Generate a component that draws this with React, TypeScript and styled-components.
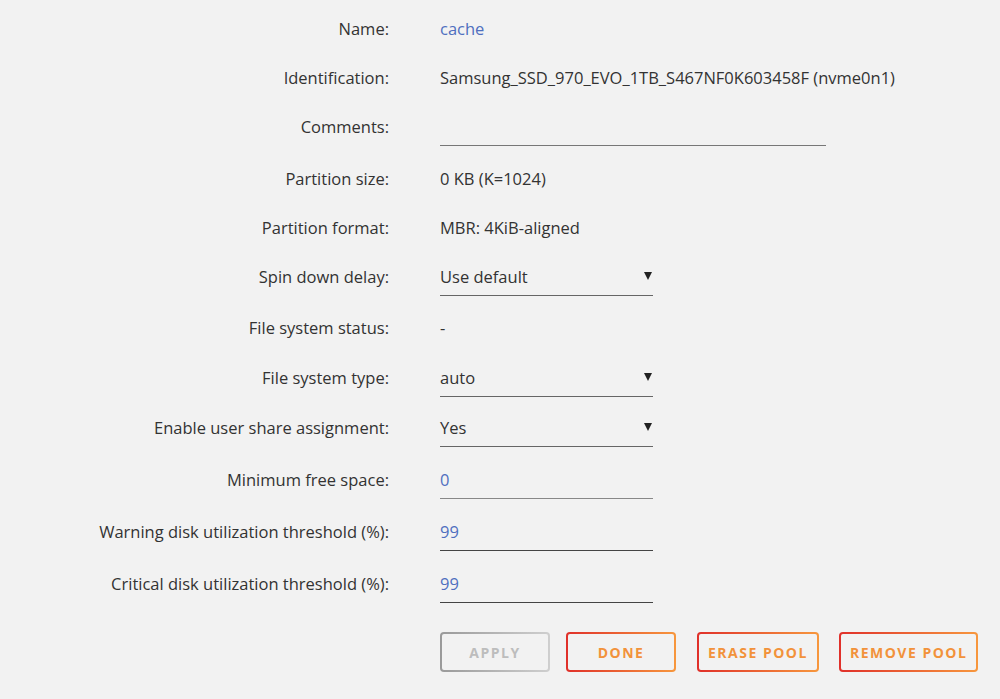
import React from 'react';
import styled, { createGlobalStyle } from 'styled-components';

const GlobalStyle = createGlobalStyle`
  html, body {
    margin: 0;
    padding: 0;
    background: #f2f2f2;
  }
  body {
    font-family: "Open Sans", "Noto Sans", sans-serif;
    color: #333;
  }
`;

const Page = styled.div`
  padding-top: 18px;
  width: 1000px;
  height: 699px;
  box-sizing: border-box;
  overflow: hidden;
`;

const Row = styled.div<{ $gap: number }>`
  display: flex;
  align-items: flex-start;
  margin-bottom: ${p => p.$gap}px;
`;

const Label = styled.div`
  width: 389px;
  flex: none;
  text-align: right;
  font-size: 16.5px;
  line-height: 21px;
  color: #333;
`;

const Value = styled.div<{ $blue?: boolean }>`
  margin-left: 51px;
  font-size: 16.5px;
  line-height: 21px;
  color: ${p => (p.$blue ? '#4f6fbf' : '#333')};
`;

const Field = styled.div<{ $width: number; $line: string; $blue?: boolean }>`
  margin-left: 51px;
  width: ${p => p.$width}px;
  height: 21px;
  padding-bottom: 8px;
  border-bottom: 1px solid ${p => p.$line};
  font-size: 16.5px;
  line-height: 21px;
  color: ${p => (p.$blue ? '#4f6fbf' : '#333')};
  position: relative;
`;

const Arrow = styled.span`
  position: absolute;
  right: 1px;
  top: 6px;
  width: 0;
  height: 0;
  border-left: 4px solid transparent;
  border-right: 4px solid transparent;
  border-top: 8px solid #222;
`;

const Buttons = styled.div`
  display: flex;
  margin-left: 440px;
  margin-top: 29px;
`;

const Button = styled.button<{ $disabled?: boolean; $gap: number }>`
  box-sizing: border-box;
  height: 40px;
  min-width: 110px;
  padding: 0 9px;
  margin-right: ${p => p.$gap}px;
  border: 2px solid transparent;
  border-radius: 4px;
  background:
    linear-gradient(#f2f2f2, #f2f2f2) padding-box,
    linear-gradient(90deg, ${p => (p.$disabled ? '#9a9a9a, #cfcfcf' : '#e0302a, #f7973d')}) border-box;
  font-family: "Open Sans", "Noto Sans", sans-serif;
  font-weight: 700;
  font-size: 14px;
  letter-spacing: 1.5px;
  color: ${p => (p.$disabled ? '#bdbdbd' : '#f2923b')};
  cursor: ${p => (p.$disabled ? 'default' : 'pointer')};
`;

const App = () => {
  return (
    <Page>
      <GlobalStyle />
      <Row $gap={28}>
        <Label>Name:</Label>
        <Value $blue>cache</Value>
      </Row>
      <Row $gap={28}>
        <Label>Identification:</Label>
        <Value>Samsung_SSD_970_EVO_1TB_S467NF0K603458F (nvme0n1)</Value>
      </Row>
      <Row $gap={22}>
        <Label>Comments:</Label>
        <Field $width={386} $line="#777" />
      </Row>
      <Row $gap={28}>
        <Label>Partition size:</Label>
        <Value>0 KB (K=1024)</Value>
      </Row>
      <Row $gap={28}>
        <Label>Partition format:</Label>
        <Value>MBR: 4KiB-aligned</Value>
      </Row>
      <Row $gap={21}>
        <Label>Spin down delay:</Label>
        <Field $width={213} $line="#666">Use default<Arrow /></Field>
      </Row>
      <Row $gap={29}>
        <Label>File system status:</Label>
        <Value>-</Value>
      </Row>
      <Row $gap={20}>
        <Label>File system type:</Label>
        <Field $width={213} $line="#666">auto<Arrow /></Field>
      </Row>
      <Row $gap={22}>
        <Label>Enable user share assignment:</Label>
        <Field $width={213} $line="#666">Yes<Arrow /></Field>
      </Row>
      <Row $gap={22}>
        <Label>Minimum free space:</Label>
        <Field $width={213} $line="#888" $blue>0</Field>
      </Row>
      <Row $gap={22}>
        <Label>Warning disk utilization threshold (%):</Label>
        <Field $width={213} $line="#444" $blue>99</Field>
      </Row>
      <Row $gap={0}>
        <Label>Critical disk utilization threshold (%):</Label>
        <Field $width={213} $line="#444" $blue>99</Field>
      </Row>
      <Buttons>
        <Button $disabled $gap={16}>APPLY</Button>
        <Button $gap={21}>DONE</Button>
        <Button $gap={20}>ERASE POOL</Button>
        <Button $gap={0}>REMOVE POOL</Button>
      </Buttons>
    </Page>
  );
};

export default App;
